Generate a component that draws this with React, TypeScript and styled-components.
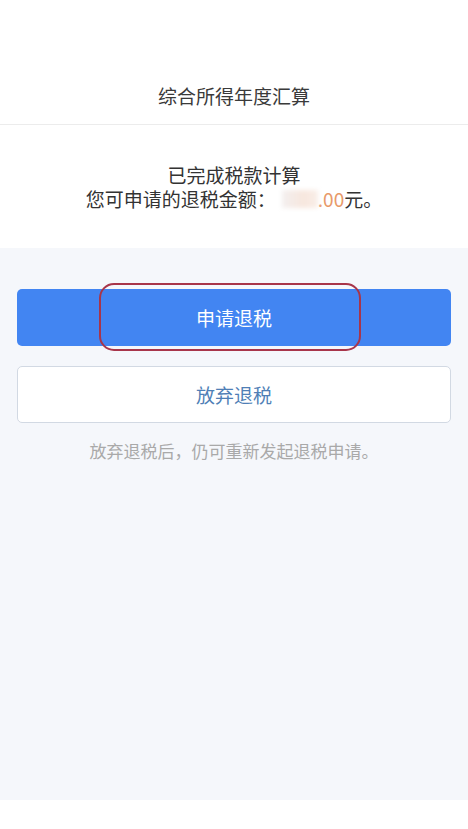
import React from 'react';
import styled, { createGlobalStyle } from 'styled-components';

const GlobalStyle = createGlobalStyle`
  html, body {
    margin: 0;
    padding: 0;
    background: #ffffff;
  }
  body {
    font-family: "Noto Sans CJK SC", "Noto Sans", sans-serif;
    color: #333333;
  }
`;

const Page = styled.div`
  width: 468px;
  min-height: 829px;
  display: flex;
  flex-direction: column;
  background: #ffffff;
`;

const Header = styled.header`
  height: 125px;
  box-sizing: border-box;
  display: flex;
  align-items: flex-end;
  justify-content: center;
  padding-bottom: 16px;
  border-bottom: 1px solid #ececec;
  font-size: 19px;
  line-height: 24px;
  color: #3a3a3a;
`;

const Summary = styled.section`
  height: 123px;
  box-sizing: border-box;
  padding-top: 38px;
  display: flex;
  flex-direction: column;
  align-items: center;
  font-size: 19px;
  line-height: 24px;
  color: #333333;
`;

const Line = styled.div`
  display: flex;
  align-items: center;
  white-space: nowrap;
`;

const Masked = styled.span`
  display: inline-block;
  width: 36px;
  height: 18px;
  margin-left: 6px;
  background: linear-gradient(90deg, #f3efef 0%, #f7e7de 60%, #f9eee8 100%);
  filter: blur(2px);
`;

const Amount = styled.span`
  color: #e89a6a;
`;

const Actions = styled.section`
  background: #f5f7fb;
  height: 552px;
  box-sizing: border-box;
  padding: 41px 17px 0;
  display: flex;
  flex-direction: column;
  gap: 20px;
`;

const Button = styled.button<{ $primary?: boolean }>`
  position: relative;
  height: 57px;
  width: 100%;
  border-radius: 5px;
  font-family: inherit;
  font-size: 19px;
  cursor: pointer;
  background: ${(p) => (p.$primary ? '#4285f2' : '#ffffff')};
  color: ${(p) => (p.$primary ? '#ffffff' : '#4f7fb6')};
  border: ${(p) => (p.$primary ? 'none' : '1px solid #d2d9e3')};
`;

const Highlight = styled.span`
  position: absolute;
  left: 82px;
  top: -6px;
  width: 262px;
  height: 68px;
  box-sizing: border-box;
  border: 2px solid #a8354a;
  border-radius: 15px;
  pointer-events: none;
`;

const Note = styled.p`
  margin: -3px 0 0;
  text-align: center;
  font-size: 17px;
  line-height: 22px;
  color: #a9a9a9;
`;

const Footer = styled.div`
  flex: 1;
  background: #ffffff;
`;

export default function App() {
  return (
    <>
      <GlobalStyle />
      <Page>
        <Header>综合所得年度汇算</Header>
        <Summary>
          <Line>已完成税款计算</Line>
          <Line>
            您可申请的退税金额：
            <Masked />
            <Amount>.00</Amount>元。
          </Line>
        </Summary>
        <Actions>
          <Button $primary>
            申请退税
            <Highlight />
          </Button>
          <Button>放弃退税</Button>
          <Note>放弃退税后，仍可重新发起退税申请。</Note>
        </Actions>
        <Footer />
      </Page>
    </>
  );
}
